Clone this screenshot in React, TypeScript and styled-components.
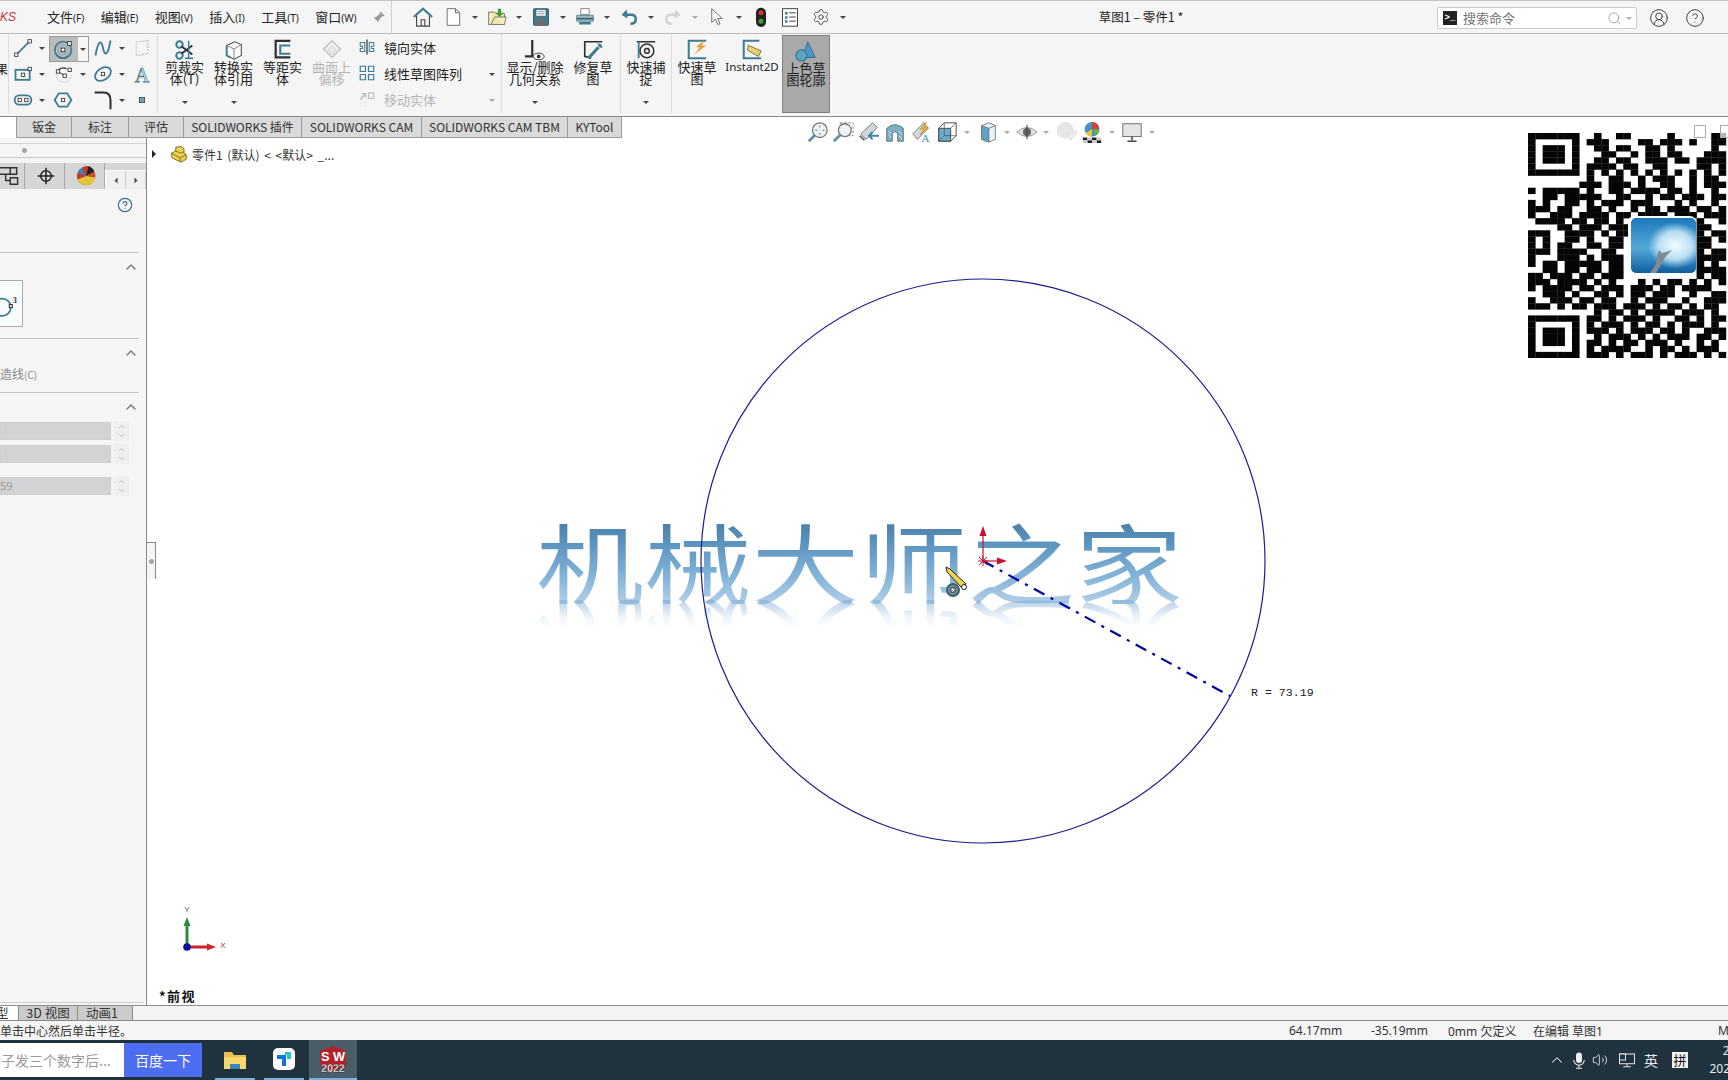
import React from "react";
import styled, { createGlobalStyle } from "styled-components";
import { Settings, Search, CircleUserRound, CircleHelp, ChevronUp, Volume2 } from "lucide-react";

const GlobalStyle = createGlobalStyle`
  html, body { margin: 0; padding: 0; width: 1728px; height: 1080px; overflow: hidden; background: #fff; }
  body { font-family: "Noto Sans", "Noto Sans CJK SC", sans-serif; color: #222; }
  #root { width: 1728px; height: 1080px; overflow: hidden; }
  * { box-sizing: border-box; }
`;

const CJK = `"Noto Sans CJK SC", "Noto Sans", sans-serif`;
const T = "#3c7d94";
const D = "#2f2f2f";

const Page = styled.div`display: flex; flex-direction: column; width: 1728px; height: 1080px; overflow: hidden;`;

/* ---------- top bar ---------- */
const TopBar = styled.header`
  display: flex; align-items: center; height: 34px; flex: none; background: #f5f5f5; position: relative;
  border-top: 1px solid #c4c4c4; border-bottom: 1px solid #bcbcbc; font-family: ${CJK};
`;
const Brand = styled.div`width: 47px; flex: none; overflow: hidden; display: flex; font: italic 12px "Liberation Sans", sans-serif; color: #c9323a;`;
const Menu = styled.nav`display: flex; gap: 16.5px; flex: none; font-size: 13px; line-height: 16px; color: #222;`;
const MenuItem = styled.span`white-space: nowrap;`;
const Hot = styled.small`font-size: 10px; font-family: "Noto Sans", sans-serif;`;
const PinSlot = styled.div`width: 12px; margin-left: 16px; flex: none; display: flex; justify-content: center;`;
const BarDivider = styled.div`width: 1px; height: 33px; margin-left: 6px; margin-right: 20px; background: #d0d0d0; flex: none;`;
const Quick = styled.div<{ $ml?: number }>`width: 22px; height: 24px; flex: none; display: flex; align-items: center; justify-content: center; margin-left: ${(p) => p.$ml ?? 0}px;`;
const Title = styled.div`margin-left: 245px; margin-top: -2px; font-size: 12.5px; white-space: nowrap; color: #222; flex: none;`;
const SearchBox = styled.div`
  position: absolute; left: 1437px; top: 6px; width: 200px; height: 22px; background: #fff; border: 1px solid #ccc;
  border-radius: 2px; display: flex; align-items: center; padding: 0 0 2px 5px; font-size: 13px; color: #777;
`;
const Prompt = styled.span`width: 14px; height: 14px; background: #222; color: #fff; font: bold 9px/14px "Liberation Mono", monospace; text-align: center; margin: 2px 6px 0 0; flex: none;`;
const SearchTail = styled.div`margin-left: auto; display: flex; align-items: center; gap: 4px; padding: 2px 4px 0 0;`;
const RoundIcon = styled.div<{ $x: number }>`position: absolute; left: ${(p) => p.$x - 10}px; top: 7px; width: 20px; height: 20px; color: #444;`;

/* ---------- ribbon ---------- */
const Ribbon = styled.section`display: flex; height: 82px; flex: none; background: #f5f5f5; padding-top: 1px; font-family: ${CJK};`;
const ClipLabel = styled.div`width: 9px; flex: none; overflow: hidden; display: flex; justify-content: flex-end; padding-top: 27px; font-size: 12px; line-height: 14px; border-right: 1px solid #dcdcdc; height: 78px;`;
const RibbonGroup = styled.div<{ $w: number }>`display: flex; width: ${(p) => p.$w}px; flex: none; height: 78px; border-right: 1px solid #dcdcdc;`;
const ToolGrid = styled.div`
  display: grid; width: 149px; margin-right: 2px; flex: none; height: 78px; padding-left: 2px; border-right: 1px solid #dcdcdc;
  grid-template-columns: 24px 14px 28px 12px 28px 10px 30px; grid-auto-rows: 26px;
`;
const ToolCell = styled.div`display: flex; align-items: center; justify-content: center;`;
const ToolSelected = styled.div`
  grid-column: span 2; display: flex; align-items: center; height: 26px; margin-top: 1px; background: linear-gradient(90deg, #bcbcbc 0 28px, #f5f5f5 28px); border: 1px solid #9a9a9a;
`;
const SelIcon = styled.div`width: 27px; display: flex; justify-content: center;`;
const SelCaret = styled.div`flex: 1; display: flex; justify-content: center;`;
const Caret = styled.span<{ $light?: boolean }>`
  display: inline-block; width: 0; height: 0; border-left: 3px solid transparent; border-right: 3px solid transparent;
  border-top: 3px solid ${(p) => (p.$light ? "#aaa" : "#444")};
`;
const BigBtn = styled.div<{ $w: number; $off?: boolean; $on?: boolean }>`
  display: flex; flex-direction: column; align-items: center; width: ${(p) => p.$w}px; height: 78px; flex: none;
  color: ${(p) => (p.$off ? "#b5b5b5" : "#222")}; background: ${(p) => (p.$on ? "#a9a9a9" : "transparent")};
  ${(p) => (p.$on ? "border: 1px solid #808080;" : "")}
`;
const BigIcon = styled.div`height: 23px; margin-top: 3px; display: flex; align-items: center; justify-content: center; flex: none;`;
const BigLabel = styled.div`font-size: 13px; line-height: 12px; text-align: center; white-space: pre-line;`;
const BigLatin = styled(BigLabel)`font-family: "Noto Sans", sans-serif; font-size: 11.5px;`;
const BigCaret = styled.div`margin-top: auto; margin-bottom: 9px; line-height: 0;`;
const SmallList = styled.div`display: flex; flex-direction: column; width: 146px; margin-top: -1px; flex: none; border-right: 1px solid #dcdcdc; height: 79px;`;
const SmallRow = styled.div<{ $off?: boolean }>`
  display: flex; align-items: center; height: 26px; padding-left: 1px; padding-right: 6px; font-size: 13px;
  color: ${(p) => (p.$off ? "#b5b5b5" : "#222")};
`;
const SmallIcon = styled.div`width: 20px; margin-right: 7px; display: flex; justify-content: center; flex: none;`;
const RowCaret = styled.div`margin-left: auto; line-height: 0;`;

/* ---------- work area ---------- */
const Work = styled.div`flex: 1; display: flex; flex-direction: column; min-height: 0; border-top: 1px solid #8a8a8a;`;
const TabRow = styled.div`display: flex; height: 21px; flex: none; padding-left: 16px; background: #fff; font-size: 12px;`;
const RibTab = styled.div<{ $w: number }>`
  width: ${(p) => p.$w}px; flex: none; display: flex; align-items: center; justify-content: center; background: #d9d9d9; padding-bottom: 2px;
  border-left: 1px solid #9c9c9c; border-bottom: 1px solid #9c9c9c; font-family: ${CJK}; color: #333; white-space: nowrap;
  &:last-child { border-right: 1px solid #9c9c9c; }
`;
const Body = styled.div`flex: 1; display: flex; min-height: 0;`;

const Panel = styled.aside`width: 147px; flex: none; background: #f5f5f5; border-right: 1px solid #8a8a8a; display: flex; flex-direction: column; font-family: ${CJK};`;
const PanelGrip = styled.div`height: 15px; margin-top: 5px; border-top: 1px solid #d4d4d4; border-bottom: 1px solid #c9c9c9; display: flex; align-items: center; padding-left: 22px; flex: none;`;
const Dot = styled.span`width: 5px; height: 5px; border-radius: 50%; background: #aaa; border: 1px solid #999; display: block;`;
const PanelTabs = styled.div`display: flex; height: 26px; margin-top: 5px; flex: none; background: #d6d6d6;`;
const PanelTab = styled.div<{ $w: number }>`width: ${(p) => p.$w}px; flex: none; display: flex; align-items: center; justify-content: center; padding-left: 2px; border-right: 1px solid #aaa; overflow: hidden;`;
const ArrowPair = styled.div`flex: 1; display: flex; margin-top: 7px; background: #f0f0f0; border-left: 1px solid #fff; border-top: 1px solid #fff;`;
const ArrowCell = styled.div`flex: 1; display: flex; align-items: center; justify-content: center; border-right: 1px solid #ccc;`;
const HelpRow = styled.div`height: 63px; flex: none; display: flex; justify-content: flex-end; padding: 8px 13px 0 0; color: #3f6f8f;`;
const Section = styled.div<{ $h: number }>`height: ${(p) => p.$h}px; width: 139px; flex: none; border-top: 1px solid #c4c4c4;`;
const SectionHead = styled.div`height: 27px; display: flex; align-items: center; justify-content: flex-end; color: #777;`;
const ProfileBox = styled.div`width: 23px; height: 47px; background: #f9fcfd; border: 1px solid #aaa; border-left: 0; display: flex; align-items: center; overflow: hidden;`;
const GreyLabel = styled.div`font-size: 12px; line-height: 16px; color: #888; margin-top: 0; white-space: nowrap;`;
const SmallHot = styled.small`font-size: 10px;`;
const FieldRow = styled.div<{ $mt: number }>`display: flex; align-items: center; margin-top: ${(p) => p.$mt}px; height: 20px;`;
const Field = styled.div`width: 112px; height: 20px; background: #d2d3d5; border: 1px solid #f3f3f3; border-left: 0; box-shadow: inset 0 0 0 1px #cfcfcf; font: 11px/18px "Noto Sans", sans-serif; color: #999;`;
const Spin = styled.div`width: 15px; margin-left: 2px; height: 20px; background: #efefef; display: flex; flex-direction: column; align-items: center; justify-content: center; color: #b0b0b0;`;
const PanelFoot = styled.div`margin-top: auto; height: 3px; width: 144px; border-top: 1px solid #cfcfcf; flex: none;`;

const Canvas = styled.main`flex: 1; position: relative; background: #fff; min-width: 0;`;
const Splitter = styled.div`position: absolute; left: 0; top: 404px; width: 9px; height: 37px; background: #f5f5f5; border-top: 1px solid #8a8a8a; border-right: 1px solid #8a8a8a; display: flex; align-items: center; justify-content: center;`;
const Tree = styled.div`position: absolute; left: 0; top: 5px; display: flex; align-items: center; height: 22px; font-family: ${CJK}; font-size: 12px; word-spacing: 2px; color: #333; white-space: nowrap;`;
const TreeArrow = styled.span`margin-left: 5px; width: 0; height: 0; border-top: 4px solid transparent; border-bottom: 4px solid transparent; border-left: 4px solid #222;`;
const TreeIcon = styled.div`margin-left: 13px; margin-right: 5px; display: flex;`;
const ViewBar = styled.div`position: absolute; left: 658px; top: -18px; display: flex; align-items: center; height: 24px;`;
const ViewSlot = styled.div<{ $w: number }>`width: ${(p) => p.$w}px; flex: none; display: flex; justify-content: center; align-items: center;`;
const SketchLayer = styled.svg`position: absolute; left: 0; top: 0; width: 1581px; height: 868px; z-index: 2; pointer-events: none;`;
const BigText = styled.div`
  position: absolute; left: 389px; top: 378px; height: 88px; font-family: ${CJK}; font-size: 88px; line-height: 88px; white-space: nowrap;
  transform: scaleX(1.225); transform-origin: left center; color: transparent; -webkit-text-fill-color: transparent;
  background: linear-gradient(180deg, #47799f 0%, #5a93bf 30%, #83b3d8 68%, #b2d0e8 100%); -webkit-background-clip: text; background-clip: text;
  &::after {
    content: "机械大师之家"; position: absolute; left: 0; top: 84px; transform: scaleY(-1);
    background: linear-gradient(to top, rgba(115, 165, 210, 0.5) 0%, rgba(140, 185, 222, 0.14) 20%, rgba(255, 255, 255, 0) 32%);
    -webkit-background-clip: text; background-clip: text;
  }
`;
const RadiusTag = styled.div`position: absolute; left: 1104px; top: 548px; font: 11.6px/14px "Liberation Mono", monospace; color: #222; white-space: nowrap; z-index: 3;`;
const ViewName = styled.div`position: absolute; left: 12px; top: 850px; font: bold 13px/16px ${CJK}; letter-spacing: 1.5px; color: #111; white-space: nowrap;`;
const QrSvg = styled.svg`position: absolute; left: 1381px; top: -5px; width: 200px; height: 225px; filter: blur(0.45px); z-index: 1;`;
const WinBtn = styled.div<{ $x: number; $y: number }>`position: absolute; left: ${(p) => p.$x}px; top: ${(p) => p.$y}px; width: 12px; height: 13px; border: 1px solid #aaa; background: rgba(255,255,255,.7); z-index: 2;`;

/* ---------- bottom ---------- */
const BottomTabs = styled.div`display: flex; height: 16px; flex: none; background: #f4f4f4; border-top: 1px solid #8a8a8a; border-bottom: 1px solid #8a8a8a; font-family: ${CJK}; font-size: 12.5px; line-height: 14px;`;
const BottomTab = styled.div<{ $w: number; $on?: boolean; $pr?: number }>`
  width: ${(p) => p.$w}px; flex: none; text-align: center; background: ${(p) => (p.$on ? "#fff" : "#cbcbcb")}; border-right: 1px solid #8a8a8a; color: #333; overflow: hidden; white-space: nowrap;
  padding-right: ${(p) => p.$pr ?? 0}px;
  ${(p) => (p.$on ? "text-align: left; text-indent: -4px;" : "")}
`;
const StatusBar = styled.div`display: flex; align-items: center; height: 19px; flex: none; background: #f5f5f5; font-size: 12px; color: #333; font-family: "Noto Sans", "Noto Sans CJK SC", sans-serif;`;
const StatusCell = styled.div<{ $w: number }>`width: ${(p) => p.$w}px; flex: none; white-space: nowrap; overflow: hidden;`;
const Taskbar = styled.footer`display: flex; height: 40px; flex: none; background: #20323e; font-family: ${CJK}; color: #fff;`;
const WebSearch = styled.div`width: 124px; height: 34px; margin-top: 3px; background: #fff; overflow: hidden; white-space: nowrap; font-size: 14px; line-height: 34px; color: #999; flex: none;`;
const WebText = styled.div`margin-left: -13px;`;
const WebBtn = styled.div`width: 78px; height: 34px; margin-top: 3px; background: #4e6ef2; text-align: center; font-size: 14px; line-height: 34px; color: #fff; flex: none;`;
const AppCell = styled.div<{ $w: number; $ml: number; $on?: boolean }>`
  width: ${(p) => p.$w}px; margin-left: ${(p) => p.$ml}px; flex: none; display: flex; align-items: center; justify-content: center;
  border-bottom: 2px solid #79b4d8; background: ${(p) => (p.$on ? "#4b5d69" : "transparent")};
`;
const Tray = styled.div<{ $w: number; $ml?: number }>`width: ${(p) => p.$w}px; margin-left: ${(p) => p.$ml ?? 0}px; flex: none; display: flex; align-items: center; justify-content: center; font-size: 14px; color: #e8ecef;`;
const PinyinBox = styled.span`display: block; width: 16px; height: 16px; background: #f2f2f2; color: #111; font-size: 13px; line-height: 16px; text-align: center;`;
const Clock = styled.div`width: 76px; margin-left: 12px; flex: none; text-align: center; font: 12px/18px "Noto Sans", sans-serif; padding-top: 2px; color: #e8ecef; white-space: nowrap;`;

const Ico = styled.svg<{ $s?: number }>`width: ${(p) => p.$s ?? 22}px; height: ${(p) => p.$s ?? 22}px; display: block; flex: none; overflow: visible;`;
const SW = ({ s, children, vb = 24 }: { s?: number; children: React.ReactNode; vb?: number }) => (
  <Ico $s={s} viewBox={`0 0 ${vb} ${vb}`} fill="none">{children}</Ico>
);
const Sq = ({ x, y, r = 2 }: { x: number; y: number; r?: number }) => (
  <rect x={x - r} y={y - r} width={r * 2} height={r * 2} fill="#fff" stroke={D} strokeWidth="1" />
);

const icons: Record<string, React.ReactNode> = {
  line: <><path d="M5 19 19 5" stroke={T} strokeWidth="2" /><Sq x={4} y={20} /><Sq x={20} y={4} /></>,
  circle: <><circle cx="11" cy="13" r="9" stroke={T} strokeWidth="2" /><circle cx="11" cy="13" r="5.5" stroke="#8fa9b3" strokeWidth="1.4" /><Sq x={11} y={13} /><Sq x={18} y={6} /></>,
  spline: <path d="M3 21C6 3 10 1 12 12s6 9 9-9" stroke={T} strokeWidth="2.2" />,
  dashed: <path d="M5 5l14-2v16l-14 2z" stroke="#bbb" strokeWidth="1.4" strokeDasharray="2 1.5" />,
  rect: <><rect x="3" y="7" width="17" height="12" stroke={T} strokeWidth="2.2" /><Sq x={12} y={13} /><Sq x={20} y={6} /></>,
  arc: <><path d="M5 9a9 9 0 1 0 17 3" stroke="#c4c4c4" strokeWidth="1.4" strokeDasharray="1.5 1.5" /><path d="M5 9C8 4 14 4 16 6" stroke={D} strokeWidth="1.4" /><path d="M6 9l8 5" stroke={D} strokeWidth="1.2" /><Sq x={6} y={9} /><Sq x={14} y={14} /><Sq x={20} y={7} /></>,
  ellipse: <><ellipse cx="12" cy="12" rx="10.5" ry="7" transform="rotate(-35 12 12)" stroke={T} strokeWidth="2.2" /><Sq x={12} y={12} /></>,
  textA: <text x="12" y="21" textAnchor="middle" fontFamily="Liberation Serif" fontSize="24" fill="#f2f6f8" stroke={T} strokeWidth=".9">A</text>,
  slot: <><rect x="2" y="6.5" width="20" height="11" rx="5.5" stroke={T} strokeWidth="2.2" /><Sq x={8} y={12} /><Sq x={16} y={12} /></>,
  hex: <><path d="M7 4h10l5 8-5 8H7l-5-8z" stroke={T} strokeWidth="2.2" /><Sq x={12} y={12} /></>,
  fillet: <path d="M2 3h11q8 0 8 9v11" stroke={D} strokeWidth="2.4" />,
  point: <rect x="8" y="8" width="8" height="8" fill="#6aa4b7" stroke={D} strokeWidth="1" />,
  trim: <><circle cx="6" cy="6" r="3.5" stroke={T} strokeWidth="2.2" /><circle cx="6" cy="18" r="3.5" stroke={T} strokeWidth="2.2" /><path d="M8 8l12 9M8 16L20 7" stroke={D} strokeWidth="2" /><path d="M16 2v20M12 21h9" stroke={T} strokeWidth="1.6" /></>,
  convert: <><path d="M4 7l9-4 7 3v12l-8 4-8-4z" fill="#fff" stroke="#555" strokeWidth="1.2" /><path d="M4 7l8 4 8-5M12 11v11" stroke="#777" strokeWidth="1" /><path d="M4 7v11l4 2" stroke={T} strokeWidth="2" /></>,
  offset: <><path d="M20 2H4v18h16" stroke={D} strokeWidth="2.4" /><path d="M20 7H9v9h11" stroke={T} strokeWidth="2.2" /></>,
  surfOff: <><path d="M12 2l9 9-9 9-9-9z" stroke="#c9c9c9" strokeWidth="2" /><path d="M12 7l5 5-5 5-5-5z" fill="#e6e6e6" stroke="#ccc" /></>,
  mirror: <><path d="M12 2v20" stroke={D} strokeWidth="1.6" /><path d="M9 6H3v5h3v3H3v4h6zM15 6h6v5h-3v3h3v4h-6z" stroke={T} strokeWidth="1.4" /></>,
  pattern: <path d="M3 3h7v7H3zM14 3h7v7h-7zM3 14h7v7H3zM14 14h7v7h-7z" stroke={T} strokeWidth="1.6" />,
  move: <><path d="M3 13L10 5M5 5h5v5" stroke="#bdbdbd" strokeWidth="1.8" /><rect x="14" y="4" width="7" height="7" stroke="#bdbdbd" strokeWidth="1.6" /><path d="M3 17h8v5H3z" stroke="#ddd" strokeDasharray="1.5 1.5" /></>,
  rel: <><path d="M9 1v18M1 19h11" stroke={D} strokeWidth="2.4" /><ellipse cx="16" cy="19" rx="6" ry="3.6" fill="#fff" stroke={D} /><circle cx="16" cy="19" r="2" fill={D} /></>,
  repair: <><path d="M22 3H3v16l7 2" stroke={D} strokeWidth="1.8" /><path d="M7 21L18 9" stroke={T} strokeWidth="3.4" /><path d="M17 5a4 4 0 0 1 5 5l-3-1-1-1z" fill={T} /></>,
  snap: <><path d="M2 3h20" stroke={D} strokeWidth="1.6" /><path d="M4 3v18" stroke={T} strokeWidth="2" /><circle cx="13" cy="13" r="7.5" stroke={D} strokeWidth="1.6" /><circle cx="13" cy="13" r="2.6" stroke={D} strokeWidth="1.6" /></>,
  quickS: <><path d="M22 2H3v19h19" stroke={T} strokeWidth="2.2" /><path d="M20 1l-9 8h4l-6 8 13-10h-5z" fill="#f29a2e" /></>,
  inst2d: <><path d="M20 2H3v19h19" stroke={T} strokeWidth="2.2" /><path d="M8 7l14 6-3 6L7 12z" fill="#e9d27a" stroke="#7a6a2a" /></>,
  shaded: <><path d="M14 2l8 17H8z" fill="#4b97c5" stroke="#2c6c93" /><circle cx="7" cy="17" r="6" fill="#5ba3c7" stroke={T} strokeWidth="1.6" /></>,
  home: <><path d="M2 12L12 3l10 9" stroke={T} strokeWidth="2.4" /><path d="M5 11v11h14V11M10 22v-7h4v7" stroke="#444" strokeWidth="1.2" /></>,
  doc: <path d="M5 2h10l5 5v15H5zM15 2v5h5" fill="#fff" stroke="#666" strokeWidth="1.1" />,
  open: <><path d="M2 6h7l2 2h10v13H5z" fill="#f0e6a8" stroke="#666" /><path d="M2 6v15h3l4-9h14l-2 9" fill="#f6eebb" stroke="#666" /><path d="M13 2h4v5h3l-5 5-5-5h3z" fill="#3f9a3a" /></>,
  save: <><rect x="3" y="2" width="18" height="20" rx="1" fill={T} stroke="#27525f" /><rect x="6" y="3" width="12" height="8" fill="#eef4f6" stroke="#27525f" strokeWidth=".7" /><path d="M8 5.5h8M8 8h8" stroke="#777" strokeWidth=".8" /><rect x="7" y="14" width="10" height="8" fill="#6b6b6b" /></>,
  print: <><rect x="7" y="2" width="10" height="7" fill="#fff" stroke="#777" /><path d="M2 10h20v7H2z" fill="#8eb9c7" stroke="#4d7f90" /><path d="M2 14h20" stroke="#444" strokeWidth="1.4" /><path d="M5 18h14v3H5z" fill="#3c7d94" /></>,
  undo: <><path d="M5 9h10q6 0 6 6t-7 6" stroke={T} strokeWidth="3.4" /><path d="M9 2L2 9l8 5z" fill={T} /></>,
  redo: <><path d="M19 9H9q-6 0-6 6t7 6" stroke="#d3d3d3" strokeWidth="3.4" /><path d="M15 2l7 7-8 5z" fill="#d3d3d3" /></>,
  select: <path d="M5 1v18l5-4 3 7 3-1-3-7h6z" fill="#fff" stroke="#555" strokeWidth="1.1" />,
  traffic: <><rect x="6" y="1" width="12" height="23" rx="6" fill="#222" /><circle cx="12" cy="7" r="3" fill="#d33" /><circle cx="12" cy="17" r="3" fill="#3aa63a" /></>,
  options: <><rect x="3" y="2" width="18" height="21" fill="#fff" stroke="#444" strokeWidth="1.2" /><path d="M6 6h3v3H6zM6 11h3v3H6zM6 16h3v3H6z" fill={T} /><path d="M11 7h8M11 12h8M11 17h8" stroke="#444" strokeWidth="1.2" /></>,
  part: <><path d="M3 11l6-3V3l7-1 4 3v6l3 2v6l-7 4-12-6z" fill="#efd04f" stroke="#6d5a14" strokeWidth="1.1" /><path d="M3 11l12 6 8-4M15 17v5M9 8l7 3 4-2" stroke="#6d5a14" strokeWidth="1" /></>,
  zoomFit: <><circle cx="14" cy="10" r="8" fill="#eef2f4" stroke="#777" strokeWidth="1.4" /><path d="M9 15l-7 7" stroke="#5b93a8" strokeWidth="3" /><path d="M14 5v2M14 13v2M9 10h2M17 10h2" stroke="#666" /></>,
  zoomArea: <><path d="M9 2h14v14H9z" stroke="#777" strokeDasharray="2.5 2" /><circle cx="14" cy="10" r="7" fill="#eef2f4" stroke="#777" strokeWidth="1.4" /><path d="M9 15l-7 7" stroke="#5b93a8" strokeWidth="3" /></>,
  prevView: <><path d="M3 14L16 2l5 5L9 20z" fill="#cfd8dc" stroke="#777" /><path d="M2 16l5 5" stroke="#777" strokeWidth="2.4" /><path d="M23 16H12M16 12l-4 4 4 4" stroke="#3f87a6" strokeWidth="2.2" /></>,
  section: <><path d="M3 8q9-8 18 0v14H15v-9q-3-3-6 0v9H3z" fill="#7fb0c3" stroke="#4d6a75" /><path d="M5 11l3 3M5 15l3 3M16 11l4 4M16 16l4 4" stroke="#eef" /></>,
  dynAnno: <><path d="M3 14L15 2l5 6L8 20z" fill="#d5d8da" stroke="#777" /><path d="M18 1l-7 8h4l-4 6 9-8h-4z" fill="#efb02e" stroke="#a87612" strokeWidth=".5" /><text x="17" y="23" textAnchor="middle" fontFamily="Liberation Serif" fontSize="12" fill="#4a8fa8">A</text></>,
  cubeView: <><path d="M3 8l6-6h13v14l-6 6H3z" fill="#fff" stroke="#444" /><path d="M3 8h13v14H3z" fill="#6cabc9" stroke="#444" /><path d="M16 8l6-6M9 2v14M9 16h13M3 22l6-6" stroke="#555" strokeWidth=".8" /></>,
  cubeShade: <><path d="M5 5l8-3 7 3v15l-7 3-8-3z" fill="#e8f3f8" stroke="#777" /><path d="M5 5l8 3v15l-8-3z" fill="#5da3c5" stroke="#777" /><path d="M13 8l7-3" stroke="#777" /></>,
  eye: <><path d="M1 12q11-10 22 0-11 10-22 0z" fill="#e2e2e2" stroke="#999" /><circle cx="12" cy="12" r="4.4" fill="#666" /><path d="M12 4v16" stroke="#444" strokeWidth="1.2" /></>,
  ghost: <><circle cx="10" cy="10" r="8.5" fill="#e7e7e7" stroke="#dedede" /><path d="M12 16l9-6 2 2-7 9z" fill="#ededed" stroke="#ddd" /></>,
  scene: <><circle cx="12" cy="9" r="8" fill="#4a90c8" /><path d="M12 9V1a8 8 0 0 1 8 8z" fill="#d2413d" /><path d="M12 9h8a8 8 0 0 1-4 7z" fill="#5fb14b" /><path d="M12 9v8a8 8 0 0 1-7-4z" fill="#e9c73f" /><path d="M2 18h5v3H2zM12 18h5v3h-5zM7 21h5v3H7zM17 21h5v3h-5z" fill="#222" /><path d="M7 18h5v3H7zM17 18h5v3h-5zM2 21h5v3H2zM12 21h5v3h-5z" fill="#ccc" /></>,
  monitor: <><rect x="2" y="3" width="20" height="14" fill="#e5e5e5" stroke="#666" /><path d="M12 17v4M7 22h10" stroke="#444" strokeWidth="1.6" /></>,
  colorWheel: <><circle cx="12" cy="12" r="11" fill="#4f9e3f" /><path d="M12 12L7 2a11 11 0 0 0-5 6z" fill="#3e7fc1" /><path d="M12 12L7 2a11 11 0 0 1 8-2z" fill="#c9362f" /><path d="M12 12l3-12a11 11 0 0 1 7 7z" fill="#222" /><path d="M12 12l10-5a11 11 0 0 1 1 7z" fill="#d24b2a" /><path d="M12 12l11 2a11 11 0 0 1-21 2z" fill="#e8c134" /><path d="M12 12L2 16a11 11 0 0 1 0-8z" fill="#c9362f" /></>,
  crosshair: <><circle cx="12" cy="12" r="7" stroke="#222" strokeWidth="2" /><path d="M12 1v22M1 12h22" stroke="#222" strokeWidth="2" /></>,
  config: <path d="M-3 3h12v7H-3zM9 14h8v7H9zM4 10v7h5M9 3h7v7h-7" stroke="#333" strokeWidth="1.6" />,
  folder: <><path d="M1 5h8l2 3h12v14H1z" fill="#e9c04f" /><path d="M1 10h22v12H1z" fill="#f6d76b" /><path d="M7 22v-5h10v5z" fill="#3a86bd" /></>,
  app: <><rect x="1" y="1" width="22" height="22" rx="5" fill="#fff" /><path d="M5 8h9v11h-4v-7H5z" fill="#0b78d6" /><path d="M13 5h6v7h-4V8h-2z" fill="#27c5c9" /></>,
  mic: <><rect x="8" y="2" width="8" height="14" rx="4" fill="#eaf0f3" /><path d="M5 12a7 7 0 0 0 14 0M12 19v4M8 23h8" stroke="#eaf0f3" strokeWidth="1.4" /></>,
  net: <><rect x="2" y="4" width="20" height="13" stroke="#e8ecef" strokeWidth="1.3" /><rect x="2" y="4" width="8" height="8" fill="#20323e" stroke="#e8ecef" strokeWidth="1.3" /><path d="M12 17v4M7 21h10" stroke="#e8ecef" strokeWidth="1.3" /></>,
};
const Icon = ({ n, s }: { n: string; s?: number }) => <SW s={s}>{icons[n]}</SW>;

const qrRows = [
  "#######..#..##.....#.....##", "#.....#.###....##.###.#..##", "#.###.#..##.##..##.#.....#.", "#.###.#...##..#.##.##...###",
  "#.###.#..##.##..###.##.####", "#.....#.####.##..##....##.#", "#######.#.#.#.#.#.#.#.#.#.#", "........#..##..#.###..#.##.",
  ".......###.###.#..##..#.###", "#.#####.#..##.####.##.#..#.", "..##.#####..##..#.##.###.##", "#.#..##.#.###.###...#.#..#.",
  "###.##..##.#..#.##.###.##.#", "#..###.####.##.####.###.###", ".####.##.##.#..####.#..#..#", "....##.###.###.........##..",
  "###..####.#.##.........#.##", "#.#..##.#..##..........##.#", "#.#.##..##.##..........##..", "###.####..##...........#.##",
  "#...###.#.###..........####", "#.##.#####.##..........#.#.", "..##.##.##.##..........####", "##.###.##.###..........#.##",
  "###.####.#.#...#.#.##.#.#.#", "#.####.##.###.###.##.####..", "..###.#..##.#.##.###..#..##", "#..###.##.##..#.###..#..###",
  "###.#.##.###.###.#.##.#.##.", ".........#.##.#.####.###.#.", "#######.##.#.###.#..##.#.##", "#.....#.#.###.#.##.#.###.#.",
  "#.###.#.###.#.###.##.#..###", "#.###.#..#.###.#.#.###.##.#", "#.###.#.##.#.##.###.#..#.#.", "#.....#.#.####..#.##.#.###.",
  "#######.###.#.###.#.###.#.#",
];

const QrCode = () => (
  <QrSvg viewBox="0 0 200 225" preserveAspectRatio="none">
    <defs>
      <linearGradient id="qrSky" x1="0" y1="0" x2="0" y2="1">
        <stop offset="0" stopColor="#1d78bb" /><stop offset=".55" stopColor="#54a9d9" /><stop offset="1" stopColor="#0e5d9e" />
      </linearGradient>
      <radialGradient id="qrGlow" cx=".68" cy=".5" r=".42">
        <stop offset="0" stopColor="#f4fcff" /><stop offset=".6" stopColor="#d8f0fb" stopOpacity=".8" /><stop offset="1" stopColor="#bfe6f7" stopOpacity="0" />
      </radialGradient>
    </defs>
    {qrRows.flatMap((row, r) =>
      row.split("").map((c, i) =>
        c === "#" ? <rect key={`${r}-${i}`} x={i * 7.33} y={r * 6.08} width="7.6" height="6.35" fill="#050505" /> : null
      )
    )}
    <rect x="100" y="83" width="68" height="60" rx="6" fill="#fff" />
    <rect x="103" y="85" width="65" height="55" rx="5" fill="url(#qrSky)" />
    <rect x="103" y="85" width="65" height="55" rx="5" fill="url(#qrGlow)" />
    <path d="M122 140l6-9 1-8 2-6 3 3 4-1 6-2-5 5-3 4-3 6-5 8z" fill="#7f8a96" />
  </QrSvg>
);

const ToolRow = [
  ["line", "c", "SEL", "spline", "c", "dashed"],
  ["rect", "c", "arc", "c", "ellipse", "c", "textA"],
  ["slot", "c", "hex", "", "fillet", "c", "point"],
];

const viewItems: [string, number][] = [
  ["zoomFit", 25], ["zoomArea", 26], ["prevView", 26], ["section", 26], ["dynAnno", 25], ["cubeView", 27], ["c", 13],
  ["cubeShade", 29], ["c", 10], ["eye", 29], ["c", 10], ["ghost", 31], ["scene", 19], ["c", 21], ["monitor", 20], ["c", 19],
];

const SpinPair = () => (
  <Spin><ChevronUp size={9} /><ChevronUp size={9} style={{ transform: "rotate(180deg)" }} /></Spin>
);

export default function App() {
  return (
    <Page>
      <GlobalStyle />
      <TopBar>
        <Brand><span>KS</span></Brand>
        <Menu>
          <MenuItem>文件<Hot>(F)</Hot></MenuItem>
          <MenuItem>编辑<Hot>(E)</Hot></MenuItem>
          <MenuItem>视图<Hot>(V)</Hot></MenuItem>
          <MenuItem>插入<Hot>(I)</Hot></MenuItem>
          <MenuItem>工具<Hot>(T)</Hot></MenuItem>
          <MenuItem>窗口<Hot>(W)</Hot></MenuItem>
        </Menu>
        <PinSlot>
          <SW s={14}><path d="M14 2l8 8-5 1-5 6-1 4-4-4-5 5 5-5-4-4 4-1 6-5z" fill="#9a9a9a" /></SW>
        </PinSlot>
        <BarDivider />
        <Quick><Icon n="home" s={22} /></Quick>
        <Quick $ml={8}><Icon n="doc" s={20} /></Quick>
        <Quick><Caret /></Quick>
        <Quick><Icon n="open" s={20} /></Quick>
        <Quick><Caret /></Quick>
        <Quick><Icon n="save" s={20} /></Quick>
        <Quick><Caret /></Quick>
        <Quick><Icon n="print" s={20} /></Quick>
        <Quick><Caret /></Quick>
        <Quick><Icon n="undo" s={18} /></Quick>
        <Quick><Caret /></Quick>
        <Quick><Icon n="redo" s={18} /></Quick>
        <Quick><Caret $light /></Quick>
        <Quick><Icon n="select" s={18} /></Quick>
        <Quick><Caret /></Quick>
        <Quick><Icon n="traffic" s={20} /></Quick>
        <Quick $ml={7}><Icon n="options" s={20} /></Quick>
        <Quick $ml={9}><Settings size={18} strokeWidth={1.2} color="#444" /></Quick>
        <Quick><Caret /></Quick>
        <Title>草图1 – 零件1 *</Title>
        <SearchBox>
          <Prompt>&gt;_</Prompt>搜索命令
          <SearchTail><Search size={15} strokeWidth={1.3} color="#999" /><Caret $light /></SearchTail>
        </SearchBox>
        <RoundIcon $x={1659}><CircleUserRound size={20} strokeWidth={1.2} /></RoundIcon>
        <RoundIcon $x={1695}><CircleHelp size={20} strokeWidth={1.2} /></RoundIcon>
      </TopBar>

      <Ribbon>
        <ClipLabel>果</ClipLabel>
        <ToolGrid>
          {ToolRow.flat().map((t, i) =>
            t === "SEL" ? (
              <ToolSelected key={i}>
                <SelIcon><Icon n="circle" s={22} /></SelIcon>
                <SelCaret><Caret /></SelCaret>
              </ToolSelected>
            ) : (
              <ToolCell key={i}>
                {t === "c" ? <Caret /> : t ? <Icon n={t} s={t === "point" ? 16 : 20} /> : null}
              </ToolCell>
            )
          )}
        </ToolGrid>
        <BigBtn $w={49}><BigIcon><Icon n="trim" /></BigIcon><BigLabel>{"剪裁实\n体(T)"}</BigLabel><BigCaret><Caret /></BigCaret></BigBtn>
        <BigBtn $w={49}><BigIcon><Icon n="convert" /></BigIcon><BigLabel>{"转换实\n体引用"}</BigLabel><BigCaret><Caret /></BigCaret></BigBtn>
        <BigBtn $w={49}><BigIcon><Icon n="offset" /></BigIcon><BigLabel>{"等距实\n体"}</BigLabel></BigBtn>
        <BigBtn $w={49} $off><BigIcon><Icon n="surfOff" /></BigIcon><BigLabel>{"曲面上\n偏移"}</BigLabel></BigBtn>
        <SmallList>
          <SmallRow><SmallIcon><Icon n="mirror" s={18} /></SmallIcon>镜向实体</SmallRow>
          <SmallRow><SmallIcon><Icon n="pattern" s={18} /></SmallIcon>线性草图阵列<RowCaret><Caret /></RowCaret></SmallRow>
          <SmallRow $off><SmallIcon><Icon n="move" s={18} /></SmallIcon>移动实体<RowCaret><Caret $light /></RowCaret></SmallRow>
        </SmallList>
        <RibbonGroup $w={119}>
          <BigBtn $w={66}><BigIcon><Icon n="rel" /></BigIcon><BigLabel>{"显示/删除\n几何关系"}</BigLabel><BigCaret><Caret /></BigCaret></BigBtn>
          <BigBtn $w={50}><BigIcon><Icon n="repair" /></BigIcon><BigLabel>{"修复草\n图"}</BigLabel></BigBtn>
        </RibbonGroup>
        <RibbonGroup $w={51}>
          <BigBtn $w={50}><BigIcon><Icon n="snap" /></BigIcon><BigLabel>{"快速捕\n捉"}</BigLabel><BigCaret><Caret /></BigCaret></BigBtn>
        </RibbonGroup>
        <BigBtn $w={50}><BigIcon><Icon n="quickS" /></BigIcon><BigLabel>{"快速草\n图"}</BigLabel></BigBtn>
        <BigBtn $w={60}><BigIcon><Icon n="inst2d" /></BigIcon><BigLatin>Instant2D</BigLatin></BigBtn>
        <BigBtn $w={48} $on><BigIcon><Icon n="shaded" /></BigIcon><BigLabel>{"上色草\n图轮廓"}</BigLabel></BigBtn>
      </Ribbon>

      <Work>
        <TabRow>
          <RibTab $w={55}>钣金</RibTab>
          <RibTab $w={57}>标注</RibTab>
          <RibTab $w={55}>评估</RibTab>
          <RibTab $w={118}>SOLIDWORKS 插件</RibTab>
          <RibTab $w={120}>SOLIDWORKS CAM</RibTab>
          <RibTab $w={146}>SOLIDWORKS CAM TBM</RibTab>
          <RibTab $w={55}>KYTool</RibTab>
        </TabRow>
        <Body>
          <Panel>
            <PanelGrip><Dot /></PanelGrip>
            <PanelTabs>
              <PanelTab $w={25}><Icon n="config" s={22} /></PanelTab>
              <PanelTab $w={40}><Icon n="crosshair" s={18} /></PanelTab>
              <PanelTab $w={40}><Icon n="colorWheel" s={20} /></PanelTab>
              <ArrowPair>
                <ArrowCell><Caret style={{ transform: "rotate(90deg)" }} /></ArrowCell>
                <ArrowCell><Caret style={{ transform: "rotate(-90deg)" }} /></ArrowCell>
              </ArrowPair>
            </PanelTabs>
            <HelpRow><CircleHelp size={16} strokeWidth={1.8} /></HelpRow>
            <Section $h={86}>
              <SectionHead><ChevronUp size={16} strokeWidth={2} /></SectionHead>
              <ProfileBox>
                <SW s={26}><circle cx="2" cy="15" r="8" stroke={T} strokeWidth="1.6" /><Sq x={10} y={14} r={1.4} /><text x="12" y="11" fontSize="7" fontWeight="bold" fill="#222" fontFamily="Liberation Serif">3</text></SW>
              </ProfileBox>
            </Section>
            <Section $h={54}>
              <SectionHead><ChevronUp size={16} strokeWidth={2} /></SectionHead>
              <GreyLabel>造线<SmallHot>(C)</SmallHot></GreyLabel>
            </Section>
            <Section $h={110}>
              <SectionHead><ChevronUp size={16} strokeWidth={2} /></SectionHead>
              <FieldRow $mt={1}><Field /><SpinPair /></FieldRow>
              <FieldRow $mt={3}><Field /><SpinPair /></FieldRow>
              <FieldRow $mt={12}><Field>59</Field><SpinPair /></FieldRow>
            </Section>
            <PanelFoot />
          </Panel>
          <Canvas>
            <BigText>机械大师之家</BigText>
            <QrCode />
            <WinBtn $x={1547} $y={-13} />
            <WinBtn $x={1573} $y={-13} />
            <Tree>
              <TreeArrow />
              <TreeIcon><Icon n="part" s={18} /></TreeIcon>
              零件1 (默认) &lt; &lt;默认&gt; _...
            </Tree>
            <ViewBar>
              {viewItems.map(([n, w], i) => (
                <ViewSlot key={i} $w={w}>
                  {n === "c" ? <Caret $light /> : <Icon n={n} s={22} />}
                </ViewSlot>
              ))}
            </ViewBar>
            <SketchLayer viewBox="0 0 1581 868">
              <circle cx="836" cy="423" r="282" fill="none" stroke="#1c1c8f" strokeWidth="1.2" />
              <line x1="836" y1="423" x2="1083" y2="558" stroke="#0000a8" strokeWidth="2.2" strokeDasharray="12 7 3 7" />
              <path d="M836 423V396" stroke="#c8102e" strokeWidth="1.2" />
              <path d="M836 423H852" stroke="#c8102e" strokeWidth="1.2" />
              <path d="M836 388l-3.5 10h7zM860 423l-10-3.5v7z" fill="#c8102e" />
              <path d="M832 419l8 8M840 419l-8 8M836 418v10M831 423h10" stroke="#c8102e" strokeWidth="1" />
              <circle cx="806" cy="452" r="6" fill="#6e8f9e" stroke="#3e5f6d" strokeWidth="2" />
              <rect x="804" y="450" width="4" height="4" fill="#fff" stroke="#222" strokeWidth=".8" />
              <path d="M799 429l4 2 16 15-4 4-15-16z" fill="#f0d34d" stroke="#222" strokeWidth="1" />
              <circle cx="817" cy="449" r="2.5" fill="#fff" stroke="#222" />
              <path d="M40 809V785" stroke="#2e8b3d" strokeWidth="3" />
              <path d="M40 779l-3.5 9h7z" fill="#2e8b3d" />
              <path d="M40 809H62" stroke="#c9252d" strokeWidth="3" />
              <path d="M69 809l-9-3.5v7z" fill="#c9252d" />
              <circle cx="40" cy="809" r="3.8" fill="#0a0a9a" />
              <text x="40" y="774" textAnchor="middle" fontFamily="Liberation Sans" fontSize="8" fill="#3a6b3f">Y</text>
              <text x="76" y="810" textAnchor="middle" fontFamily="Liberation Sans" fontSize="8" fill="#a33">X</text>
            </SketchLayer>
            <RadiusTag>R = 73.19</RadiusTag>
            <ViewName>*前视</ViewName>
            <Splitter><Dot /></Splitter>
          </Canvas>
        </Body>
      </Work>

      <BottomTabs>
        <BottomTab $w={19} $on>型</BottomTab>
        <BottomTab $w={59}>3D 视图</BottomTab>
        <BottomTab $w={55} $pr={6}>动画1</BottomTab>
      </BottomTabs>
      <StatusBar>
        <StatusCell $w={1289}>单击中心然后单击半径。</StatusCell>
        <StatusCell $w={82}>64.17mm</StatusCell>
        <StatusCell $w={77}>-35.19mm</StatusCell>
        <StatusCell $w={85}>0mm 欠定义</StatusCell>
        <StatusCell $w={185}>在编辑 草图1</StatusCell>
        <StatusCell $w={10}>MMGS</StatusCell>
      </StatusBar>
      <Taskbar>
        <WebSearch><WebText>女子发三个数字后...</WebText></WebSearch>
        <WebBtn>百度一下</WebBtn>
        <AppCell $w={40} $ml={13}><Icon n="folder" s={24} /></AppCell>
        <AppCell $w={40} $ml={9}><Icon n="app" s={24} /></AppCell>
        <AppCell $w={48} $ml={5} $on>
          <SW s={28}>
            <path d="M1 5l11-4 11 4v13l-11 5-11-5z" fill="#b3202a" />
            <text x="12" y="14" textAnchor="middle" fontSize="11" fontWeight="bold" fill="#fff" fontFamily="Liberation Sans">S W</text>
            <text x="12" y="23" textAnchor="middle" fontSize="9" fontWeight="bold" fill="#fff" stroke="#111" strokeWidth=".25" fontFamily="Liberation Sans">2022</text>
          </SW>
        </AppCell>
        <Tray $w={22} $ml={1189}><ChevronUp size={18} strokeWidth={1.4} /></Tray>
        <Tray $w={22}><Icon n="mic" s={18} /></Tray>
        <Tray $w={20}><Volume2 size={16} strokeWidth={1.3} /></Tray>
        <Tray $w={34}><Icon n="net" s={18} /></Tray>
        <Tray $w={14}>英</Tray>
        <Tray $w={16} $ml={14}><PinyinBox>拼</PinyinBox></Tray>
        <Clock>21:32<br />2022/3/24</Clock>
      </Taskbar>
    </Page>
  );
}
